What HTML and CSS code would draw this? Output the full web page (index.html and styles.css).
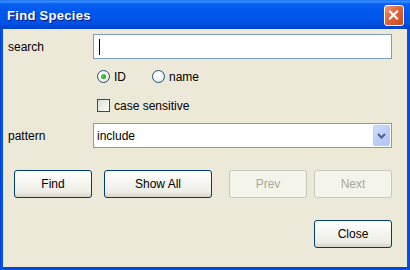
FILE: index.html
```html
<!DOCTYPE html>
<html>
<head>
<meta charset="utf-8">
<link rel="stylesheet" href="styles.css">
</head>
<body>
<div class="window">
  <div class="titlebar">
    <span class="title">Find Species</span>
    <span class="close-x">
      <svg width="20" height="21" viewBox="0 0 20 21"><path d="M5.5 5.5 L14.5 14.5 M14.5 5.5 L5.5 14.5" stroke="#fff" stroke-width="2.2" fill="none"/></svg>
    </span>
  </div>
  <div class="client">
    <div class="row row-search">
      <label class="label">search</label>
      <div class="input"><span class="caret"></span></div>
    </div>
    <div class="row row-radio">
      <div class="opt opt-id"><span class="radio checked"><span class="dot"></span></span><span>ID</span></div>
      <div class="opt"><span class="radio"></span><span>name</span></div>
    </div>
    <div class="row row-check">
      <div class="opt"><span class="check"></span><span>case sensitive</span></div>
    </div>
    <div class="row row-pattern">
      <label class="label">pattern</label>
      <div class="select">
        <span class="sel-text">include</span>
        <span class="drop">
          <svg width="9" height="6" viewBox="0 0 9 6"><path d="M1 1 L4.5 4.5 L8 1" stroke="#4D6185" stroke-width="2" fill="none"/></svg>
        </span>
      </div>
    </div>
    <div class="row row-buttons">
      <button class="btn btn-find">Find</button>
      <button class="btn btn-show">Show All</button>
      <button class="btn btn-prev" disabled>Prev</button>
      <button class="btn btn-next" disabled>Next</button>
    </div>
    <div class="row row-close">
      <button class="btn btn-close">Close</button>
    </div>
  </div>
</div>
</body>
</html>
```
FILE: styles.css
```css
html, body {
  margin: 0;
  padding: 0;
  background: #ffffff;
}
body {
  width: 410px;
  height: 270px;
  overflow: hidden;
  font-family: "Liberation Sans", Arial, sans-serif;
  font-size: 12px;
  color: #000;
}
.window {
  width: 410px;
  height: 270px;
  display: flex;
  flex-direction: column;
  background: linear-gradient(to right, #0831D9 0, #0055E5 1px, #0055E5 409px, #0831D9 410px);
}
.titlebar {
  height: 29px;
  flex: none;
  display: flex;
  justify-content: space-between;
  align-items: flex-start;
  background: linear-gradient(to bottom,
    #0A5FE8 0px, #3D95FF 1px, #2F86FA 2px, #0B5FF0 4px,
    #0058EE 10px, #0055EA 18px, #0050E2 24px, #0046D4 27px, #0040C8 29px);
}
.title {
  margin: 8px 0 0 7px;
  font-family: "Liberation Sans", Arial, sans-serif;
  font-weight: bold;
  font-size: 13px;
  letter-spacing: 0.3px;
  color: #fff;
  text-shadow: 1px 1px 0 #0A1883;
  line-height: 15px;
}
.close-x {
  margin: 5px 6px 0 0;
  width: 20px;
  height: 21px;
  box-sizing: border-box;
  border: 1px solid #fff;
  border-radius: 3px;
  background: linear-gradient(135deg, #F09A76 0%, #E2693E 40%, #C9461A 100%);
  display: flex;
}
.close-x svg { margin: -1px 0 0 -1px; }
.client {
  flex: 1;
  margin: 0 3px 3px 3px;
  background: #ECE9D8;
  padding: 5px 15px 0 5px;
  display: flex;
  flex-direction: column;
  box-shadow: 0 2px 0 #0046D8;
}
.row {
  display: flex;
  align-items: center;
}
.label {
  width: 85px;
  flex: none;
}
.row-search { height: 25px; }
.input {
  width: 300px;
  height: 25px;
  box-sizing: border-box;
  border: 1px solid #7F9DB9;
  background: #fff;
  display: flex;
  align-items: center;
  padding-left: 5px;
}
.caret {
  width: 1px;
  height: 16px;
  background: #000;
}
.row-radio {
  margin-top: 10px;
  height: 15px;
  padding-left: 89px;
}
.opt {
  display: flex;
  align-items: center;
  gap: 4px;
}
.opt-id { width: 55px; }
.radio {
  width: 13px;
  height: 13px;
  box-sizing: border-box;
  border-radius: 50%;
  border: 1px solid #1C5180;
  background: radial-gradient(circle at 35% 35%, #ffffff 30%, #DCD9C9 100%);
  display: flex;
  align-items: center;
  justify-content: center;
}
.dot {
  width: 5px;
  height: 5px;
  border-radius: 50%;
  background: radial-gradient(circle at 40% 40%, #55D651 0%, #21A121 70%);
}
.row-check {
  margin-top: 14px;
  height: 15px;
  padding-left: 89px;
}
.check {
  width: 13px;
  height: 13px;
  box-sizing: border-box;
  border: 1px solid #1C5180;
  background: linear-gradient(135deg, #DCDCD7 0%, #F0F0EC 60%, #ffffff 100%);
}
.row-pattern {
  margin-top: 10px;
  height: 25px;
}
.select {
  width: 300px;
  height: 25px;
  box-sizing: border-box;
  border: 1px solid #7F9DB9;
  background: #fff;
  display: flex;
  align-items: center;
  padding: 0 0 0 3px;
}
.sel-text { flex: 1; }
.drop {
  width: 17px;
  height: 21px;
  box-sizing: border-box;
  margin-right: 1px;
  border: 1px solid #B9CDF6;
  border-radius: 2px;
  background: linear-gradient(135deg, #D2E0FD 0%, #BCCFFA 50%, #AFC5F5 100%);
  display: flex;
  align-items: center;
  justify-content: center;
}
.row-buttons {
  margin-top: 22px;
  height: 28px;
  padding-left: 6px;
}
.btn {
  height: 28px;
  width: 78px;
  box-sizing: border-box;
  border: 1px solid #003C74;
  border-radius: 3px;
  background: linear-gradient(to bottom, #FFFFFF 0%, #F6F6F2 40%, #EEEDE6 80%, #D8D4C8 100%);
  font-family: "Liberation Sans", Arial, sans-serif;
  font-size: 12px;
  color: #000;
  padding: 0;
  margin: 0;
}
.btn-show {
  width: 108px;
  margin-left: 12px;
}
.btn-prev { margin-left: 17px; }
.btn-next { margin-left: 7px; }
.btn:disabled {
  border-color: #C9C7BA;
  background: #F5F4EA;
  color: #ACA899;
}
.row-close {
  margin-top: 22px;
  height: 28px;
  justify-content: flex-end;
}
```
